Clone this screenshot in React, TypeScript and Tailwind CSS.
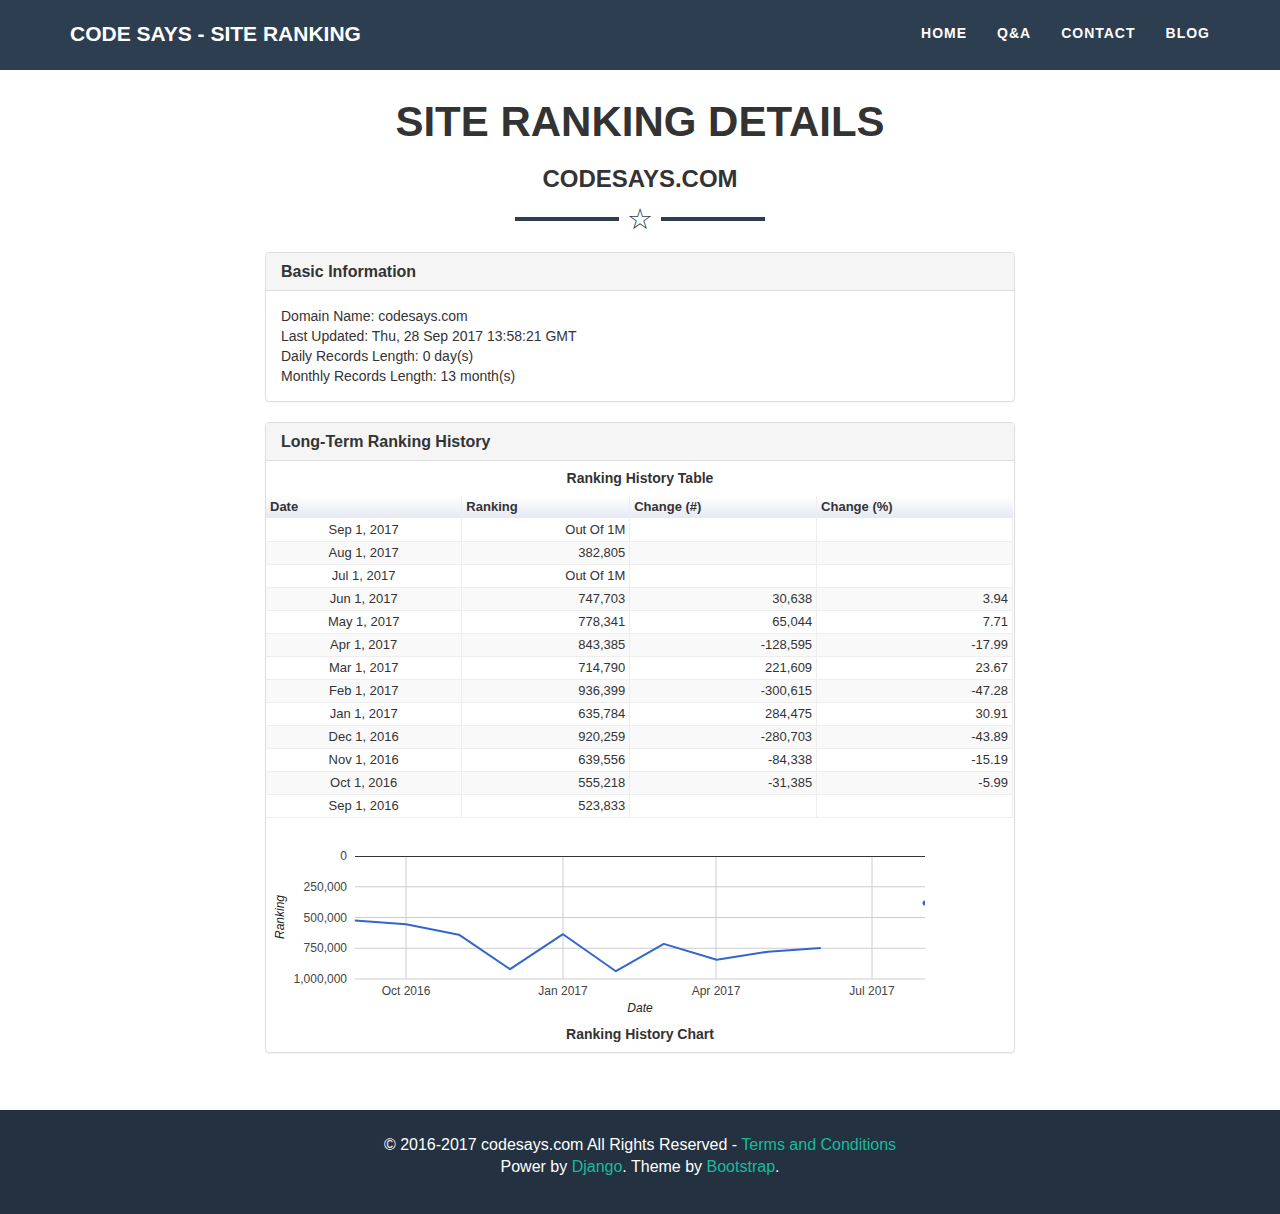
import React from "react";

const rows: [string, string, string, string][] = [
  ["Sep 1, 2017", "Out Of 1M", "", ""],
  ["Aug 1, 2017", "382,805", "", ""],
  ["Jul 1, 2017", "Out Of 1M", "", ""],
  ["Jun 1, 2017", "747,703", "30,638", "3.94"],
  ["May 1, 2017", "778,341", "65,044", "7.71"],
  ["Apr 1, 2017", "843,385", "-128,595", "-17.99"],
  ["Mar 1, 2017", "714,790", "221,609", "23.67"],
  ["Feb 1, 2017", "936,399", "-300,615", "-47.28"],
  ["Jan 1, 2017", "635,784", "284,475", "30.91"],
  ["Dec 1, 2016", "920,259", "-280,703", "-43.89"],
  ["Nov 1, 2016", "639,556", "-84,338", "-15.19"],
  ["Oct 1, 2016", "555,218", "-31,385", "-5.99"],
  ["Sep 1, 2016", "523,833", "", ""],
];

const pts: [number, number][] = [
  [88.8, 102.4],
  [140.0, 106.3],
  [192.9, 116.7],
  [244.1, 151.2],
  [297.0, 116.2],
  [349.9, 153.2],
  [397.8, 125.9],
  [450.7, 141.7],
  [501.9, 133.7],
  [554.8, 130.0],
];

function Chart() {
  const font = "'Liberation Sans', Arial, sans-serif";
  return (
    <svg width="748" height="200" className="block" style={{ fontFamily: font }}>
      <defs>
        <clipPath id="plot">
          <rect x="88" y="30" width="571" height="140" />
        </clipPath>
      </defs>
      {[68.75, 99.5, 130.25, 161].map((y) => (
        <line key={y} x1="89" x2="659" y1={y} y2={y} stroke="#cccccc" strokeWidth="1" />
      ))}
      {[140, 297, 450, 606].map((x) => (
        <line key={x} x1={x} x2={x} y1="38" y2="161" stroke="#cccccc" strokeWidth="1" />
      ))}
      <line x1="89" x2="659" y1="38.5" y2="38.5" stroke="#333333" strokeWidth="1" />
      {[
        ["0", 38],
        ["250,000", 68.75],
        ["500,000", 99.5],
        ["750,000", 130.25],
        ["1,000,000", 161],
      ].map(([t, y]) => (
        <text key={t as string} x="81" y={(y as number) + 4} textAnchor="end" fontSize="12" fill="#444444">
          {t}
        </text>
      ))}
      {[
        ["Oct 2016", 140],
        ["Jan 2017", 297],
        ["Apr 2017", 450],
        ["Jul 2017", 606],
      ].map(([t, x]) => (
        <text key={t as string} x={x} y="177" textAnchor="middle" fontSize="12" fill="#444444">
          {t}
        </text>
      ))}
      <text x="374" y="194" textAnchor="middle" fontSize="12" fontStyle="italic" fill="#222222">
        Date
      </text>
      <text
        x="18"
        y="99"
        textAnchor="middle"
        fontSize="12"
        fontStyle="italic"
        fill="#222222"
        transform="rotate(-90 18 99)"
      >
        Ranking
      </text>
      <g clipPath="url(#plot)">
        <polyline
          points={pts.map((p) => p.join(",")).join(" ")}
          fill="none"
          stroke="#3366cc"
          strokeWidth="2"
          strokeLinejoin="round"
        />
        <circle cx="659" cy="85.1" r="2.5" fill="#3366cc" />
      </g>
    </svg>
  );
}

export default function App() {
  const font = { fontFamily: "'Liberation Sans', Arial, Helvetica, sans-serif" };
  return (
    <div style={font} className="min-h-[1214px] flex flex-col bg-white text-[#333333]">
      <nav className="h-[70px] bg-[#2c3e50] flex items-center justify-between px-[70px] pb-[3px]">
        <div className="text-white font-bold text-[21px] leading-none">CODE SAYS - SITE RANKING</div>
        <ul className="flex items-center text-white font-bold text-[14px] tracking-[1px] mr-[-15px]">
          <li className="px-[15px]">HOME</li>
          <li className="px-[15px]">Q&amp;A</li>
          <li className="px-[15px]">CONTACT</li>
          <li className="px-[15px]">BLOG</li>
        </ul>
      </nav>

      <main className="flex-1 flex flex-col items-center pt-[30px] pb-[56px]">
        <h1 className="text-[42px] font-bold leading-[44px] text-[#333333]">SITE RANKING DETAILS</h1>
        <h2 className="text-[24px] font-bold leading-[24px] mt-[23px] text-[#333333]">CODESAYS.COM</h2>
        <div className="flex items-center mt-[14px] h-[28px]">
          <div className="w-[104px] h-[4px] bg-[#2c3e50]" />
          <div className="w-[42px] text-center text-[29px] leading-none text-[#2c3e50]">☆</div>
          <div className="w-[104px] h-[4px] bg-[#2c3e50]" />
        </div>

        <section className="w-[750px] mt-[19px] border border-[#dddddd] rounded-[4px] shadow-[0_1px_1px_rgba(0,0,0,0.05)]">
          <div className="h-[38px] bg-[#f5f5f5] border-b border-[#dddddd] px-[15px] flex items-center text-[16px] font-bold rounded-t-[3px]">
            Basic Information
          </div>
          <div className="px-[15px] py-[15px] text-[14px] leading-[20px]">
            <div>Domain Name: codesays.com</div>
            <div>Last Updated: Thu, 28 Sep 2017 13:58:21 GMT</div>
            <div>Daily Records Length: 0 day(s)</div>
            <div>Monthly Records Length: 13 month(s)</div>
          </div>
        </section>

        <section className="w-[750px] mt-[20px] border border-[#dddddd] rounded-[4px] shadow-[0_1px_1px_rgba(0,0,0,0.05)]">
          <div className="h-[38px] bg-[#f5f5f5] border-b border-[#dddddd] px-[15px] flex items-center text-[16px] font-bold rounded-t-[3px]">
            Long-Term Ranking History
          </div>
          <div className="pb-[8px]">
            <div className="text-center text-[14px] font-bold leading-[20px] pt-[7px] pb-[8px]">Ranking History Table</div>
            <table className="w-[747px] border-collapse text-[13px] text-[#333333]" style={{ fontFamily: "Arial, 'Liberation Sans', sans-serif" }}>
              <colgroup>
                <col className="w-[196px]" />
                <col className="w-[168px]" />
                <col className="w-[187px]" />
                <col className="w-[196px]" />
              </colgroup>
              <thead>
                <tr className="h-[22px] bg-gradient-to-b from-white to-[#e6e9f3]">
                  {["Date", "Ranking", "Change (#)", "Change (%)"].map((h) => (
                    <th key={h} className="text-left font-bold px-[4px] border-r border-[#eeeeee] last:border-r-0 text-[13px]">
                      {h}
                    </th>
                  ))}
                </tr>
              </thead>
              <tbody>
                {rows.map((r, i) => (
                  <tr key={r[0]} className={`h-[23px] border-b border-[#eeeeee] ${i % 2 === 1 ? "bg-[#f9f9f9]" : "bg-white"}`}>
                    <td className="text-center px-[4px] border-r border-[#eeeeee]">{r[0]}</td>
                    <td className="text-right px-[4px] border-r border-[#eeeeee]">{r[1]}</td>
                    <td className="text-right px-[4px] border-r border-[#eeeeee]">{r[2]}</td>
                    <td className="text-right px-[4px] border-r border-[#eeeeee]">{r[3]}</td>
                  </tr>
                ))}
              </tbody>
            </table>
            <Chart />
            <div className="text-center text-[14px] font-bold leading-[20px] mt-[6px]">Ranking History Chart</div>
          </div>
        </section>
      </main>

      <footer className="h-[104px] bg-[#233140] flex flex-col items-center justify-start pt-[24px] text-white text-[16px] leading-[22px]">
        <div>
          © 2016-2017 codesays.com All Rights Reserved - <span className="text-[#18bc9c]">Terms and Conditions</span>
        </div>
        <div>
          Power by <span className="text-[#18bc9c]">Django</span>. Theme by <span className="text-[#18bc9c]">Bootstrap</span>.
        </div>
      </footer>
    </div>
  );
}
